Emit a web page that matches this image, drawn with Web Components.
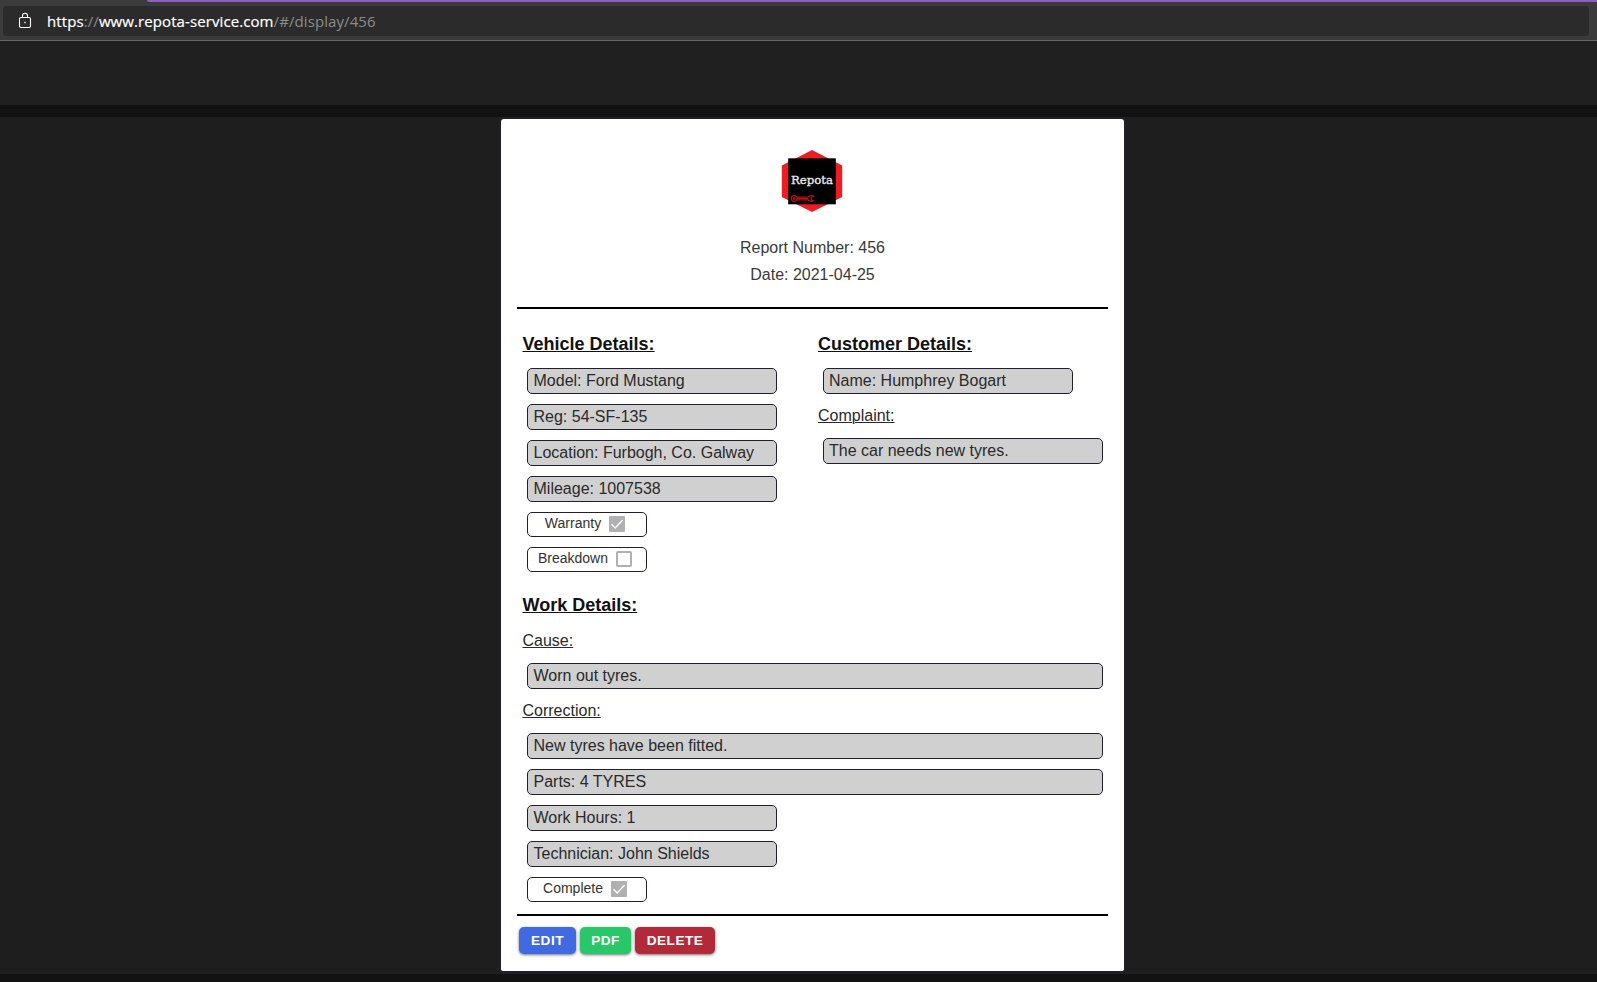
<!DOCTYPE html>
<html lang="en"><head><meta charset="utf-8"><title>Repota</title>
<style>
html,body{margin:0;height:100%;background:#1e1e1e;overflow:hidden}
body{font-family:Arial,"Liberation Sans",sans-serif}
</style></head><body>
<repota-app></repota-app>
<script>
const define=(name,html,setup)=>customElements.define(name,class extends HTMLElement{
  connectedCallback(){
    if(this.shadowRoot)return;
    const t=document.createElement('template');t.innerHTML=html;
    this.attachShadow({mode:'open'}).append(t.content.cloneNode(true));
    if(setup)setup(this);
  }
});

define('address-bar',`<style>
:host{display:block;box-sizing:border-box;height:41px;background:#3b3b3b;border-bottom:1px solid #666}
.accent{height:2px;margin-left:147px;background:#8f5fbf;border-radius:0 0 0 2px}
.bar{display:flex;align-items:center;height:30px;margin:4px 8px 0 3px;border-radius:4px;background:#2b2b2b;color:#8c8c8c;
font:15px/30px "Open Sans","Noto Sans",sans-serif;white-space:pre}
svg{width:14px;height:17px;margin:0 15px 2px 15px;flex:none}
.url{letter-spacing:.09px}
b{font-weight:400;color:#fff;-webkit-text-stroke:.2px #fff}
</style><div class="accent"></div><div class="bar">
<svg viewBox="0 0 14 17" fill="none" stroke="#fff" stroke-width="1.1"><rect x="1.500" y="5.500" width="11" height="10" rx="1.500"/><path d="M4.500 5.500V3.700a2.500 2.500 0 0 1 5 0v1.800"/><rect x="6.300" y="9.800" width="1.400" height="1.400" fill="#fff" stroke="none"/></svg><span class="url"><b>https</b>://<b>www.repota-service.com</b>/#/display/456</span></div>`);

define('repota-logo',`<style>:host{display:block;width:62px;height:64px}svg{display:block}</style>
<svg width="62" height="64" viewBox="0 0 62 64">
<path d="M31 1 61.200 16.500V48L31 63 .8 48V16.500Z" fill="#ed1c24"/>
<rect x="7.200" y="9.300" width="47.600" height="46" fill="#000"/>
<text x="31" y="34.500" text-anchor="middle" textLength="42" lengthAdjust="spacingAndGlyphs" font-family="DejaVu Serif,serif" font-size="11.500" fill="#e8e8e8" stroke="#e8e8e8" stroke-width=".35">Repota</text>
<g fill="none" stroke="#b51119" stroke-width="1.200"><circle cx="13.200" cy="49.500" r="2.800"/><circle cx="13.200" cy="49.500" r=".9"/><path d="M16 48.100H26M16 50.900H26M16 49.500H26"/><path d="M32.500 47.200 30.300 48.200V50.800L32.500 51.800C31 53 27.500 52.500 26 49.500 27.500 46.500 31 46 32.500 47.200Z"/></g>
</svg>`);

define('report-field',`<style>
:host{display:block;box-sizing:border-box;width:250px;height:26px;margin:0 0 10px 4.500px;padding:0 5.500px;border:1px solid #201e30;border-radius:5px;background:#d0d0d0;color:#2a2a2a;font-size:16px;line-height:24px;white-space:nowrap}
:host([wide]){width:auto;margin-right:5px}
</style><slot></slot>`);

define('report-check',`<style>
:host{display:flex;box-sizing:border-box;width:120px;height:25px;margin:0 0 10px 4.500px;padding:0 4px 0 0;border:1px solid #201e30;border-radius:5px;color:#333;font-size:14px;line-height:21px;justify-content:center;gap:8px}
svg{width:16px;height:16px;margin-top:3px}
.on{display:none}:host([checked]) .on{display:block}:host([checked]) .off{display:none}
</style><span><slot></slot></span>
<svg class="on" viewBox="0 0 16 16"><rect width="16" height="16" rx="1" fill="#b0b0b0"/><path d="M2.500 8.300 6.200 12 13.600 4" fill="none" stroke="#fff" stroke-width="1.400"/></svg>
<svg class="off" viewBox="0 0 16 16"><rect x="1" y="1" width="14" height="14" rx="1" fill="#fff" stroke="#b0b0b0" stroke-width="2"/></svg>`);

define('report-heading',`<style>
:host{display:block;height:44px;font-weight:700;font-size:18px;line-height:41px;color:#111;text-decoration:underline;text-underline-offset:1px;text-decoration-thickness:1px;text-decoration-skip-ink:auto}
:host([sub]){height:34px;font-weight:400;font-size:16px;line-height:24px;color:#2a2a2a}
</style><slot></slot>`);

define('report-button',`<style>
:host{display:block}
button{display:block;box-sizing:border-box;width:100%;height:27px;padding:0;border:0;border-radius:5px;background:var(--fill);color:#fff;font:700 13.600px/26px "Liberation Sans",Arial,sans-serif;letter-spacing:.5px;box-shadow:0 1px 3px rgba(0,0,0,.55)}
</style><button><slot></slot></button>`,el=>{el.style.width=el.getAttribute('w')+'px';el.style.setProperty('--fill',el.getAttribute('fill'))});

define('report-card',`<style>
:host{display:block;box-sizing:border-box;width:627px;height:857px;margin-left:499px;border:2px solid #211f2e;border-bottom-width:3px;border-radius:5px;background:#fff;padding:0 16px;line-height:27px;font-size:16px;color:#3a3a3a}
header{height:190px;box-sizing:border-box;padding-top:30px;border-bottom:2px solid #000;display:flex;flex-direction:column;align-items:center;white-space:nowrap}
repota-logo{margin:0 2px 21px 0}
.cols{display:grid;grid-template-columns:295.500px 1fr;height:262px}
section{padding:0 0 0 5.500px}
.cols section{padding-top:15px}
.work{height:345px;box-sizing:border-box;border-bottom:2px solid #000}
.work report-heading:first-child{height:58px;padding-top:14px;box-sizing:border-box}
footer{display:flex;gap:4px;padding:11px 0 0 2px}
</style>
<header><repota-logo></repota-logo><div>Report Number: 456</div><div>Date: 2021-04-25</div></header>
<div class="cols"><section><report-heading>Vehicle Details:</report-heading><report-field>Model: Ford Mustang</report-field><report-field>Reg: 54-SF-135</report-field><report-field>Location: Furbogh, Co. Galway</report-field><report-field>Mileage: 1007538</report-field><report-check checked>Warranty</report-check><report-check>Breakdown</report-check></section>
<section><report-heading>Customer Details:</report-heading><report-field>Name: Humphrey Bogart</report-field><report-heading sub>Complaint:</report-heading><report-field wide>The car needs new tyres.</report-field></section></div>
<section class="work"><report-heading>Work Details:</report-heading><report-heading sub>Cause:</report-heading><report-field wide>Worn out tyres.</report-field><report-heading sub>Correction:</report-heading><report-field wide>New tyres have been fitted.</report-field><report-field wide>Parts: 4 TYRES</report-field><report-field>Work Hours: 1</report-field><report-field>Technician: John Shields</report-field><report-check checked>Complete</report-check></section>
<footer><report-button w="57" fill="#4169e1">EDIT</report-button><report-button w="51" fill="#28c76a">PDF</report-button><report-button w="80" fill="#b22a3a">DELETE</report-button></footer>`);

define('repota-app',`<style>
:host{display:flex;flex-direction:column;height:100vh}
.nav{height:64px;background:#202020;border-bottom:12px solid #121212}
main{height:857px}
.foot{flex:1;background:#121212}
</style><address-bar></address-bar><div class="nav"></div><main><report-card></report-card></main><div class="foot"></div>`);
</script></body></html>
